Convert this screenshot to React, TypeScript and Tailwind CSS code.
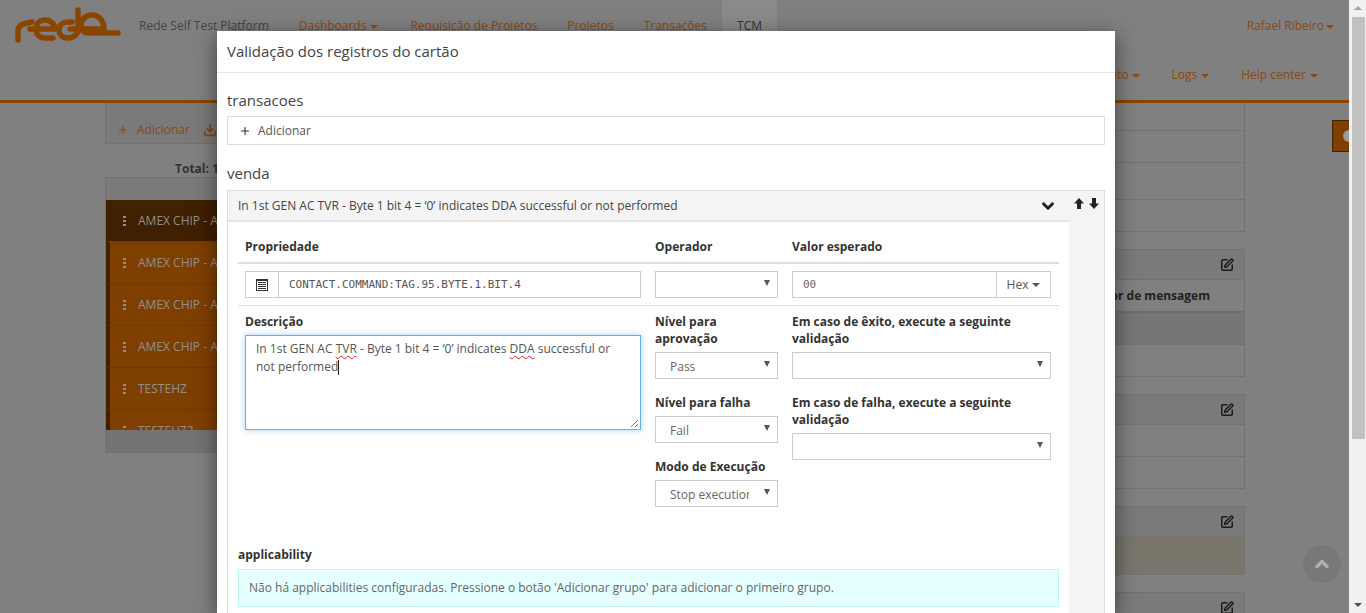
import { ChevronDown, ChevronUp, Download, Plus, SquarePen } from "lucide-react";

const sans = "font-['Open_Sans',sans-serif]";

function Caret({ className = "ml-[4px]" }: { className?: string }) {
  return <span className={`inline-block h-0 w-0 border-x-[4px] border-t-[4px] border-x-transparent border-t-current align-middle ${className}`} />;
}

function Logo() {
  return (
    <svg width="125" height="50" viewBox="0 0 125 50" fill="none" stroke="#8a4500" strokeWidth="5.5" strokeLinecap="round" strokeLinejoin="round">
      <path d="M18 40V31C18 25 22 24 32 22" />
      <path d="M30 29H55C55 24 50 20 45 20C39 20 36 24 36 29C36 34 39 38 45 38H53" />
      <path d="M78 10V29C78 34 74 38 68 38C62 38 59 34 59 30C59 25 63 22 68 22H72" />
      <path d="M70 29H104C104 20 98 15 92 15C85 15 81 20 81 26C81 31 84 33 89 33H118" />
    </svg>
  );
}

function NavItem({ label, caret, caretClass, className = "" }: { label: string; caret?: boolean; caretClass?: string; className?: string }) {
  return (
    <span className={`text-[#8a4a14] ${className}`}>
      {label}
      {caret && <Caret className={caretClass} />}
    </span>
  );
}

function Header() {
  return (
    <header className="relative h-[103px] border-b-[3px] border-[#8a4500] text-[12px]">
      <div className="flex h-[52px]">
        <div className="h-[50px] w-[139px] shrink-0"><Logo /></div>
        <div className="flex flex-1 items-center leading-[18px]">
          <span className="text-[#444]">Rede Self Test Platform</span>
          <NavItem label="Dashboards" caret className="ml-[30px]" />
          <NavItem label="Requisição de Projetos" className="ml-[32px]" />
          <NavItem label="Projetos" className="ml-[30px]" />
          <NavItem label="Transações" className="ml-[30px]" />
          <span className="ml-[15px] flex h-full items-center self-stretch bg-[#8a8a8a] px-[15px] text-[#333]">TCM</span>
          <NavItem label="Rafael Ribeiro" caret caretClass="ml-[2px]" className="ml-auto mr-[15px]" />
        </div>
      </div>
      <div className="flex justify-end pr-[31px] pt-[14px] leading-[18px]">
        <NavItem label="Gerenciamento" caret />
        <NavItem label="Logs" caret className="ml-[31px]" />
        <NavItem label="Help center" caret className="ml-[32px]" />
      </div>
    </header>
  );
}

function ListRow({ label, first }: { label: string; first?: boolean }) {
  return (
    <div className={`flex h-[42px] shrink-0 items-center gap-[12px] border-b border-l-[4px] border-b-[#6f3a08] border-l-[#3f2000] pl-[13px] text-[12px] text-[#8f8f8f] ${first ? "bg-[#3f2000]" : "bg-[#7f3f00]"}`}>
      <span className="flex flex-col gap-[2px]">
        <span className="h-[2px] w-[3px] bg-[#8f8f8f]" />
        <span className="h-[2px] w-[3px] bg-[#8f8f8f]" />
        <span className="h-[2px] w-[3px] bg-[#8f8f8f]" />
      </span>
      <span className="whitespace-nowrap">{label}</span>
    </div>
  );
}

function LeftColumn() {
  return (
    <div className="ml-[105px] w-[300px]">
      <div className="flex h-[41px] items-center border-x border-b border-[#727272] bg-[#7a7a7a] pl-[11px] pt-[14px] text-[12px] text-[#8a4a14]">
        <Plus size={12} strokeWidth={2.2} />
        <span className="ml-[8px]">Adicionar</span>
        <Download size={14} strokeWidth={3} className="ml-[13px]" />
      </div>
      <div className="mt-[16px] pl-[70px] text-[12px] font-bold leading-[17px] text-[#333]">Total: 1</div>
      <div className="border border-[#727272]">
        <div className="h-[22px] bg-[#7a7a7a]" />
        <div className="flex h-[230px] flex-col overflow-hidden">
          <ListRow label="AMEX CHIP - A" first />
          <ListRow label="AMEX CHIP - A" />
          <ListRow label="AMEX CHIP - A" />
          <ListRow label="AMEX CHIP - A" />
          <ListRow label="TESTEHZ" />
          <ListRow label="TESTEHZ2" />
        </div>
        <div className="h-[22px] bg-[#737373]" />
      </div>
    </div>
  );
}

function Card({ children, editable = true, className = "" }: { children: React.ReactNode; editable?: boolean; className?: string }) {
  return (
    <div className={`border border-[#727272] ${className}`}>
      {editable && (
        <div className="flex h-[30px] items-center justify-end border-b border-[#727272] bg-[#7a7a7a] pr-[10px]">
          <SquarePen size={14} strokeWidth={2.6} className="text-[#1c1c1c]" />
        </div>
      )}
      {children}
    </div>
  );
}

function RightColumn() {
  return (
    <div className="ml-auto mr-[104px] flex w-[300px] flex-col gap-[17px]">
      <Card editable={false} className="border-t-0">
        <div className="h-[28px] border-b border-[#727272]" />
        <div className="h-[32px] border-b border-[#727272]" />
        <div className="h-[37px] border-b border-[#727272]" />
        <div className="h-[31px]" />
      </Card>
      <Card>
        <div className="flex h-[33px] items-center justify-end border-b-2 border-[#6e6e6e] pr-[34px] text-[12px] font-bold text-[#222]">Separador de mensagem</div>
        <div className="h-[32px] border-b border-[#727272] bg-[#767676]" />
        <div className="h-[31px]" />
      </Card>
      <Card>
        <div className="h-[32px] border-b border-[#727272]" />
        <div className="h-[31px]" />
      </Card>
      <Card>
        <div className="h-[37px] bg-[#7a766c]" />
      </Card>
      <Card>
        <div className="h-[30px]" />
      </Card>
    </div>
  );
}

function Select({ value, className = "" }: { value?: string; className?: string }) {
  return (
    <div className={`flex h-[27px] items-center border border-[#ccc] bg-white pl-[14px] pr-[7px] text-[12px] text-[#666] ${className}`}>
      <span className="max-w-[79px] flex-1 overflow-hidden whitespace-nowrap pt-[3px]">{value}</span>
      <span className="ml-auto -mt-[3px] h-0 w-0 shrink-0 border-x-[3px] border-t-[6px] border-x-transparent border-t-[#555]" />
    </div>
  );
}

function Label({ children, className = "" }: { children: React.ReactNode; className?: string }) {
  return <div className={`text-[12px] font-bold leading-[17px] text-[#333] ${className}`}>{children}</div>;
}

function ListIcon() {
  return (
    <svg width="12" height="12" viewBox="0 0 12 12" fill="none" stroke="#333" strokeWidth="1">
      <rect x="0.5" y="0.5" width="11" height="11" fill="#fff" />
      <path d="M0 1.5H12M2 3.5H10M2 5.5H10M2 7.5H10M2 9.5H10" />
    </svg>
  );
}

function Misspelled({ children }: { children: React.ReactNode }) {
  return <span className="underline decoration-[#e02020] decoration-wavy decoration-1 underline-offset-2">{children}</span>;
}

function PropertyForm() {
  return (
    <div className="flex-1 border-t-2 border-[#e5e5e5] bg-white px-[10px] pb-[24px]">
      <div className="grid h-[42px] grid-cols-[396px_123px_259px] gap-x-[14px] border-b-2 border-[#ddd] px-[7px] pt-[16px]">
        <Label>Propriedade</Label>
        <Label>Operador</Label>
        <Label>Valor esperado</Label>
      </div>
      <div className="grid h-[42px] grid-cols-[396px_123px_259px] items-center gap-x-[14px] border-b border-[#ddd] px-[7px]">
        <div className="flex h-[27px] border border-[#ccc]">
          <div className="flex w-[33px] items-center justify-center border-r border-[#ccc]"><ListIcon /></div>
          <div className="flex flex-1 items-center pl-[10px] pt-[1px] font-['DejaVu_Sans_Mono',monospace] text-[11px] text-[#555]">CONTACT.COMMAND:TAG.95.BYTE.1.BIT.4</div>
        </div>
        <Select />
        <div className="flex h-[27px] border border-[#ccc]">
          <div className="flex flex-1 items-center pl-[10px] pt-[1px] font-['DejaVu_Sans_Mono',monospace] text-[11px] text-[#666]">00</div>
          <div className="flex w-[54px] items-center justify-center border-l border-[#ccc] text-[12px] text-[#555]">Hex<Caret /></div>
        </div>
      </div>
      <div className="grid grid-cols-[396px_123px_259px] gap-x-[14px] px-[7px] pt-[7px]">
        <div>
          <Label>Descrição</Label>
          <div className="relative mt-[5px] h-[95px] border border-[#66afe9] px-[10px] py-[4px] text-[12px] leading-[17.5px] text-[#555] shadow-[0_0_6px_rgba(102,175,233,0.6)]">
            <div>
              <span>In 1st GEN AC </span>
              <Misspelled>TVR</Misspelled>
              <span> - Byte 1 bit 4 = ‘0’ indicates </span>
              <Misspelled>DDA</Misspelled>
              <span> successful or</span>
            </div>
            <div>
              not performed
              <span className="inline-block h-[15px] w-px bg-[#222] align-text-bottom" />
            </div>
            <svg className="absolute bottom-[1px] right-[1px]" width="9" height="9" viewBox="0 0 9 9" stroke="#777" strokeWidth="1">
              <path d="M1 8L8 1M5 8L8 5" />
            </svg>
          </div>
        </div>
        <div>
          <Label>Nível para<br />aprovação</Label>
          <Select value="Pass" className="mt-[5px]" />
          <Label className="mt-[15px]">Nível para falha</Label>
          <Select value="Fail" className="mt-[5px]" />
          <Label className="mt-[15px]">Modo de Execução</Label>
          <Select value="Stop execution" className="mt-[5px]" />
        </div>
        <div>
          <Label>Em caso de êxito, execute a seguinte<br />validação</Label>
          <Select className="mt-[5px]" />
          <Label className="mt-[15px]">Em caso de falha, execute a seguinte<br />validação</Label>
          <Select className="mt-[5px]" />
        </div>
      </div>
      <div className="mt-[39px]">
        <Label>applicability</Label>
        <div className="mt-[6px] flex h-[38px] w-[821px] items-center border border-[#bff5f2] bg-[#e6ffff] pl-[10px] text-[12px] text-[#666]">
          Não há applicabilities configuradas. Pressione o botão 'Adicionar grupo' para adicionar o primeiro grupo.
        </div>
      </div>
    </div>
  );
}

function ModalArrows() {
  return (
    <div className="flex gap-[5px] pt-[7px] pl-[5px]">
      <svg width="10" height="11" viewBox="0 0 10 11" fill="#222"><path d="M5 0L10 5.5H7V11H3V5.5H0Z" /></svg>
      <svg width="10" height="11" viewBox="0 0 10 11" fill="#222"><path d="M5 11L10 5.5H7V0H3V5.5H0Z" /></svg>
    </div>
  );
}

function Modal() {
  return (
    <div className="absolute left-[217px] top-[31px] h-[582px] w-[898px] overflow-hidden bg-white text-[#444] shadow-[0_5px_20px_rgba(0,0,0,0.5)]">
      <div className="flex h-[42px] items-center border-b border-[#e5e5e5] pl-[10px] text-[15px]">Validação dos registros do cartão</div>
      <div className="px-[10px]">
        <div className="mt-[16px] text-[15px] leading-[22px]">transacoes</div>
        <div className="mt-[5px] flex h-[29px] items-center gap-[7px] border border-[#ddd] pl-[11px] text-[12px] text-[#555]">
          <Plus size={12} strokeWidth={2.2} className="text-[#333]" /> Adicionar
        </div>
        <div className="mt-[17px] text-[15px] leading-[22px]">venda</div>
        <div className="mt-[6px] flex border border-[#ddd] bg-[#f4f4f4]">
          <div className="flex w-[841px] flex-col">
            <div className="flex h-[29px] items-center justify-between pl-[10px] pr-[12px] text-[12px] text-[#444]">
              In 1st GEN AC TVR - Byte 1 bit 4 = ‘0’ indicates DDA successful or not performed
              <ChevronDown size={18} strokeWidth={4} className="text-[#222]" />
            </div>
            <PropertyForm />
          </div>
          <ModalArrows />
        </div>
      </div>
    </div>
  );
}

function Scrollbar() {
  return (
    <div className="flex w-[17px] flex-col items-center bg-[#f1f1f1] pl-[1px]">
      <div className="mt-[6px] h-0 w-0 border-x-[4px] border-b-[4px] border-x-transparent border-b-[#a3a3a3]" />
      <div className="mt-[7px] h-[422px] w-[13px] bg-[#c1c1c1]" />
      <div className="mt-auto mb-[6px] h-0 w-0 border-x-[4px] border-t-[4px] border-x-transparent border-t-[#505050]" />
    </div>
  );
}

export default function App() {
  return (
    <div className={`relative flex h-[613px] w-[1366px] overflow-hidden ${sans}`}>
      <div className="relative flex-1 bg-[#808080]">
        <Header />
        <div className="flex">
          <LeftColumn />
          <RightColumn />
        </div>
        <div className="absolute left-[1332px] top-[120px] flex h-[32px] w-[17px] items-center overflow-hidden border-y border-l border-[#3f2000] bg-[#7f3f00] pl-[10px]">
          <span className="h-[12px] w-[12px] shrink-0 rounded-full bg-[#9a9a9a]" />
        </div>
        <div className="absolute left-[1303px] top-[545px] flex h-[38px] w-[38px] items-center justify-center rounded-full bg-[#787878]">
          <ChevronUp size={20} strokeWidth={4} className="text-[#b0b0b0]" />
        </div>
      </div>
      <Scrollbar />
      <Modal />
    </div>
  );
}
